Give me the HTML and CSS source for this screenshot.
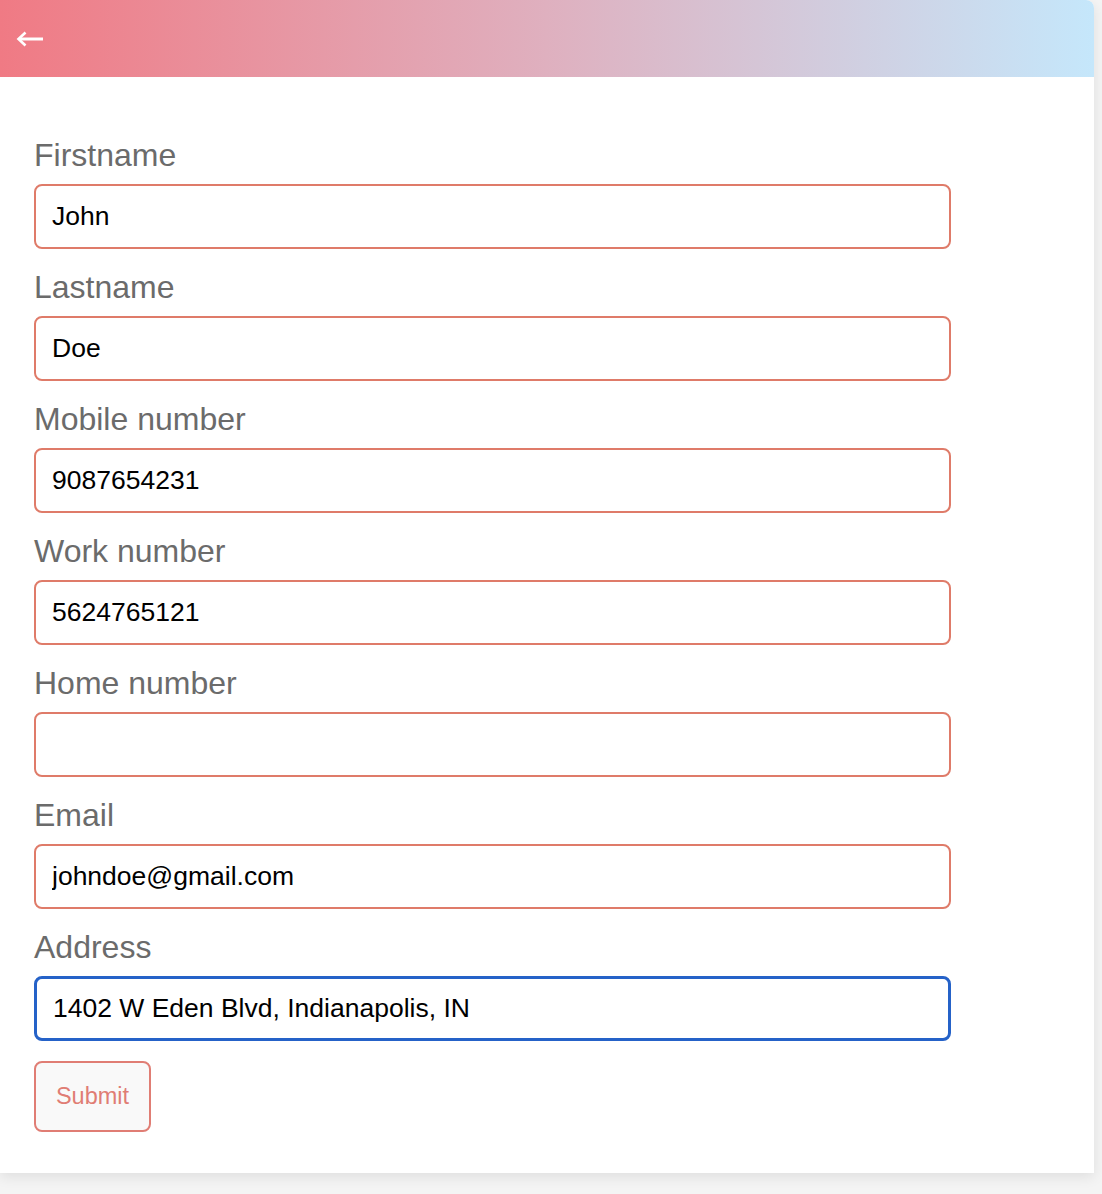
FILE: index.html
```html
<!DOCTYPE html>
<html lang="en">
<head>
<meta charset="utf-8">
<title>Edit contact</title>
<link rel="stylesheet" href="styles.css">
</head>
<body>
<div class="card">
  <header class="card-header">
    <button class="back-btn" type="button" aria-label="Back">
      <svg width="28" height="16" viewBox="0 0 28 16" aria-hidden="true">
        <path d="M3 8 H27" stroke="#fff" stroke-width="3" fill="none"/>
        <path d="M9.5 1.5 L2.5 8 L9.5 14.5" stroke="#fff" stroke-width="2.6" fill="none" stroke-linejoin="miter"/>
      </svg>
    </button>
  </header>
  <form class="contact-form">
    <div class="field">
      <label class="field-label" for="firstname">Firstname</label>
      <input class="field-input" id="firstname" type="text" value="John">
    </div>
    <div class="field">
      <label class="field-label" for="lastname">Lastname</label>
      <input class="field-input" id="lastname" type="text" value="Doe">
    </div>
    <div class="field">
      <label class="field-label" for="mobile">Mobile number</label>
      <input class="field-input" id="mobile" type="text" value="9087654231">
    </div>
    <div class="field">
      <label class="field-label" for="work">Work number</label>
      <input class="field-input" id="work" type="text" value="5624765121">
    </div>
    <div class="field">
      <label class="field-label" for="home">Home number</label>
      <input class="field-input" id="home" type="text" value="">
    </div>
    <div class="field">
      <label class="field-label" for="email">Email</label>
      <input class="field-input" id="email" type="text" value="johndoe@gmail.com">
    </div>
    <div class="field">
      <label class="field-label" for="address">Address</label>
      <input class="field-input is-focused" id="address" type="text" value="1402 W Eden Blvd, Indianapolis, IN">
    </div>
    <button class="submit-btn" type="button">Submit</button>
  </form>
</div>
</body>
</html>
```
FILE: styles.css
```css
html, body {
  margin: 0;
  padding: 0;
}

body {
  background: #f4f4f4;
  font-family: "Liberation Sans", Arial, Helvetica, sans-serif;
  min-height: 1194px;
}

.card {
  width: 1094px;
  background: #ffffff;
  border-radius: 0 8px 0 0;
  box-shadow: 0 4px 14px rgba(0, 0, 0, 0.09);
}

.card-header {
  height: 77px;
  display: flex;
  align-items: center;
  padding-left: 16px;
  border-radius: 0 8px 0 0;
  background: linear-gradient(to right, #f07a84 0%, #dfb0bf 50%, #c5e7fb 100%);
}

.back-btn {
  display: flex;
  align-items: center;
  padding: 0;
  margin: 0;
  border: 0;
  background: transparent;
  cursor: pointer;
}

.contact-form {
  padding: 60px 0 41px 34px;
  width: 917px;
}

.field {
  margin-bottom: 20px;
}

.field-label {
  display: block;
  font-size: 32px;
  line-height: 36px;
  color: #6b6b6b;
  margin-bottom: 11px;
}

.field-input {
  display: block;
  box-sizing: border-box;
  width: 917px;
  height: 65px;
  margin: 0;
  padding: 0 16px;
  border: 2px solid #df7b69;
  border-radius: 8px;
  background: #ffffff;
  font-family: "Liberation Sans", Arial, Helvetica, sans-serif;
  font-size: 26.5px;
  color: #000000;
  outline: none;
}

.field-input.is-focused {
  border: 3px solid #2562c8;
}

.submit-btn {
  display: block;
  box-sizing: border-box;
  width: 117px;
  height: 71px;
  margin-top: 3px;
  padding: 0;
  border: 2px solid #e07d74;
  border-radius: 8px;
  background: #f9f9f9;
  color: #e07d74;
  font-family: "Liberation Sans", Arial, Helvetica, sans-serif;
  font-size: 23.5px;
  cursor: pointer;
}
```
